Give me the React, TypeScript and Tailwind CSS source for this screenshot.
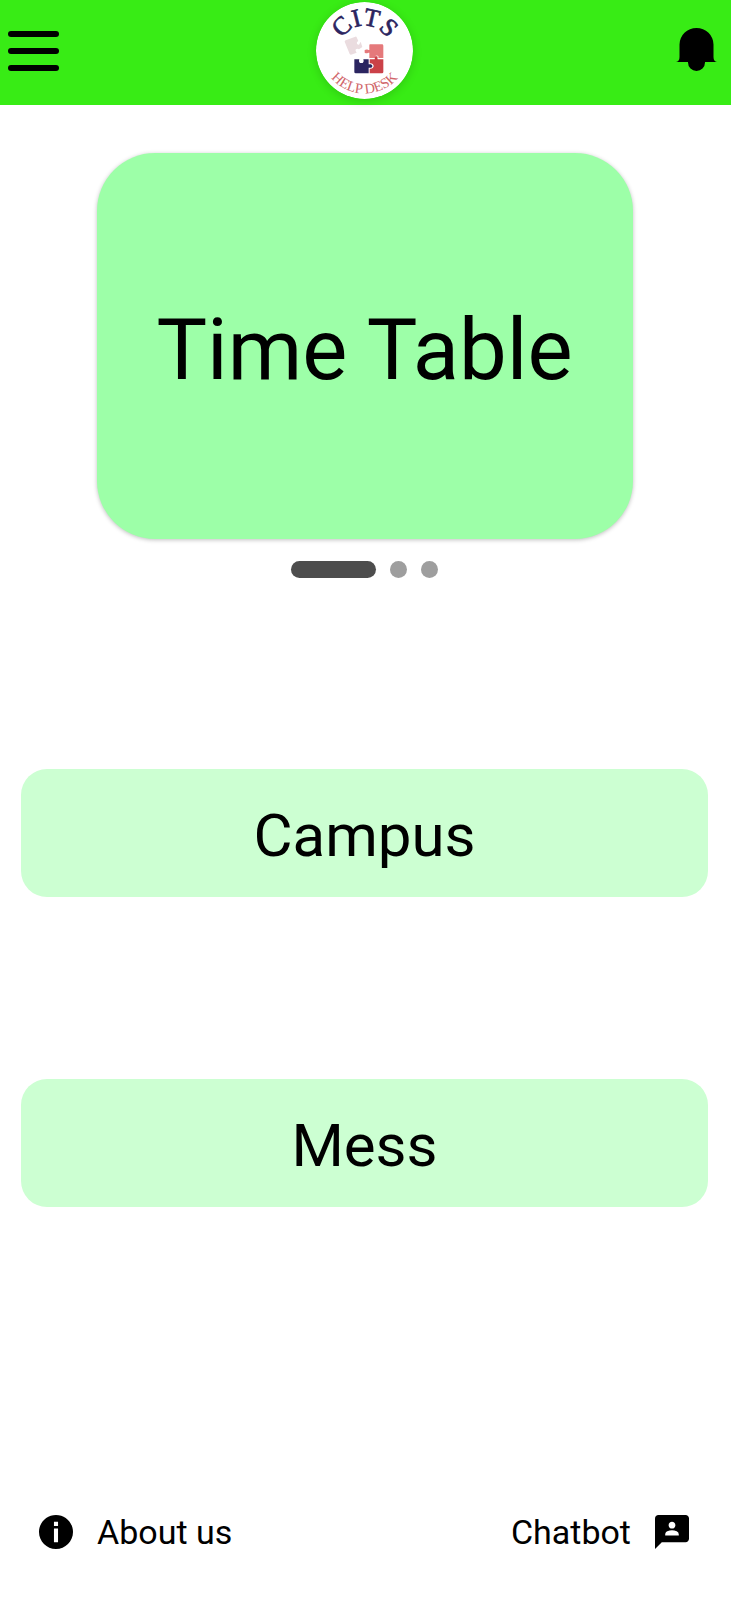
import React from "react";

function Logo() {
  return (
    <svg
      viewBox="47 5 291 291"
      className="size-[97px] rounded-full shadow-[0_2px_10px_rgba(0,0,0,0.15)]"
      role="img"
      aria-label="CITS Help Desk"
    >
      <defs>
        <path id="arc-top" d="M115.500 152.500a77 77 0 0 1 154 0" />
        <path id="arc-bottom" d="M61.500 148.500a131 131 0 0 0 262 0" />
      </defs>
      <circle cx="192.500" cy="150.500" r="145.500" fill="#fff" />
      <text
        fontFamily="'Liberation Serif', serif"
        fontSize="76"
        fill="#2b2560"
        stroke="#2b2560"
        strokeWidth="2"
        textAnchor="middle"
      >
        <textPath href="#arc-top" startOffset="50%">CITS</textPath>
      </text>
      <text
        fontFamily="'Liberation Serif', serif"
        fontSize="43"
        fill="#d0666a"
        textAnchor="middle"
      >
        <textPath href="#arc-bottom" startOffset="50%">HELP DESK</textPath>
      </text>
      <path
        fill="#eadcdf"
        d="M133 124q0-3 3-4l29-11q3-1 4 2l5 11c-7 3-5 12 2 11l5-9 5 16-10 7c-4-4-12-2-10 5l3 5-17 6q-3 0-4-2z"
      />
      <path
        fill="#e5797b"
        d="M209 132h36q4 0 4 4v37h-15c4-10-13-10-10 0h-17v-16c-5 0-7 4-14 0v-8c7-4 9 0 14 0v-14q0-3 2-3z"
      />
      <path
        fill="#2b2560"
        d="M162 177h15c-1 4-2 8 2 11h8c4-3 3-7 2-11h16v15c4-1 11-1 11 5s-7 6-11 5v17h-39q-4 0-4-4z"
      />
      <path
        fill="#cb4148"
        d="M208 177h15c2-3-2-7 2-9h5c4 2 0 6 2 9h17v38q0 4-4 4h-37v-14c7 1 12-3 12-8s-5-9-12-8z"
      />
    </svg>
  );
}

function BellIcon() {
  return (
    <svg viewBox="0 0 41 43" className="h-[43px] w-[41px]" aria-hidden="true">
      <path d="M3.500 16.500a17 16.500 0 0 1 34 0V29q0 4.500 3.500 5H29v.500a8.500 8.500 0 0 1-17 0V34H0q3.500-.500 3.500-5z" />
    </svg>
  );
}

function InfoIcon() {
  return (
    <svg viewBox="2 2 20 20" className="size-[34px]" aria-hidden="true">
      <path d="M12 2C6.480 2 2 6.480 2 12s4.480 10 10 10 10-4.480 10-10S17.520 2 12 2zm1.200 16h-2.400v-8h2.400v8zm0-9.600h-2.400V6h2.400v2.400z" />
    </svg>
  );
}

function ChatIcon() {
  return (
    <svg viewBox="2 2 20 20" className="size-[34px]" aria-hidden="true">
      <path d="M20 2H4.010c-1.100 0-2 .900-2 2L2 22l4-4h14c1.100 0 2-.900 2-2V4c0-1.100-.900-2-2-2zm-8 4c1.100 0 2 .900 2 2s-.900 2-2 2-2-.900-2-2 .900-2 2-2zm4 8H8v-.570c0-.810.480-1.530 1.220-1.850a6.950 6.950 0 0 1 5.560 0A2.010 2.010 0 0 1 16 13.430V14z" />
    </svg>
  );
}

function MenuButton({ label }: { label: string }) {
  return (
    <button
      type="button"
      className="h-32 w-full rounded-[26px] bg-[#ccffd2] pt-1.5 text-[60px] leading-none"
    >
      {label}
    </button>
  );
}

export default function App() {
  return (
    <div className="flex min-h-screen flex-col bg-white font-['Roboto',sans-serif] text-black">
      <header className="grid h-[105px] grid-cols-[1fr_auto_1fr] items-start bg-[#38ec15] pr-2.5 pl-2">
        <button
          type="button"
          aria-label="Open menu"
          className="mt-[31px] flex w-[51px] flex-col gap-[11px]"
        >
          <span className="h-1.5 w-full rounded-full bg-black" />
          <span className="h-1.5 w-full rounded-full bg-black" />
          <span className="h-1.5 w-full rounded-full bg-black" />
        </button>
        <div className="pt-0.5">
          <Logo />
        </div>
        <button
          type="button"
          aria-label="Notifications"
          className="mt-7 mr-1 justify-self-end"
        >
          <BellIcon />
        </button>
      </header>

      <main className="flex flex-col items-center pt-12 pr-[23px] pl-[21px]">
        <button
          type="button"
          className="h-[386px] w-full max-w-[536px] rounded-[58px] bg-[#9dffa8] pt-2 text-[85px] leading-none shadow-[0_1px_4px_rgba(0,0,0,0.25)]"
        >
          Time Table
        </button>
        <div className="mt-[22px] flex gap-3.5">
          <button
            type="button"
            aria-label="Slide 1"
            aria-current="true"
            className="h-[17px] w-[85px] rounded-full bg-[#4d4d4d]"
          />
          <button
            type="button"
            aria-label="Slide 2"
            className="size-[17px] rounded-full bg-[#9e9e9e]"
          />
          <button
            type="button"
            aria-label="Slide 3"
            className="size-[17px] rounded-full bg-[#9e9e9e]"
          />
        </div>
        <nav className="mt-[191px] flex w-full flex-col gap-[182px]">
          <MenuButton label="Campus" />
          <MenuButton label="Mess" />
        </nav>
      </main>

      <footer className="mt-auto flex items-center justify-between pr-[42px] pb-12 pl-[39px] text-[34px] leading-10">
        <a href="#about" className="flex items-center gap-6">
          <InfoIcon />
          About us
        </a>
        <a href="#chatbot" className="flex items-center gap-6">
          Chatbot
          <ChatIcon />
        </a>
      </footer>
    </div>
  );
}
